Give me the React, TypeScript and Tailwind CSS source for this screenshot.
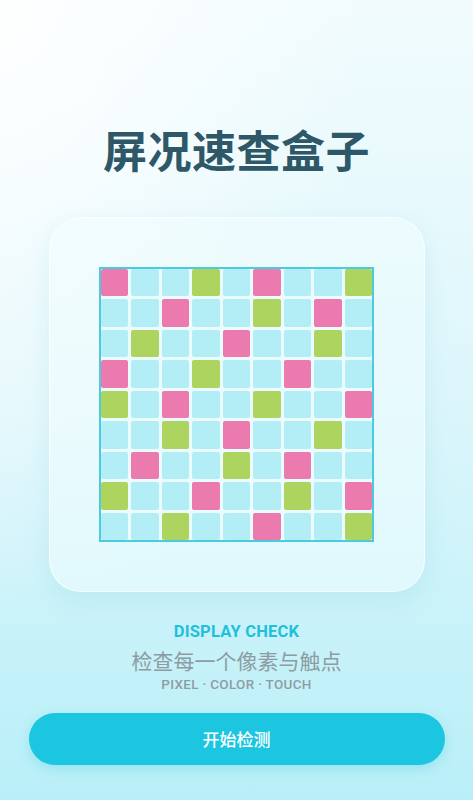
import React from "react";

const PATTERN = [
  "P..G.P..G",
  "..P..G.P.",
  ".G..P..G.",
  "P..G..P..",
  "G.P..G..P",
  "..G.P..G.",
  ".P..G.P..",
  "G..P..G.P",
  "..G..P..G",
];

function Cell({ c }: { c: string }) {
  if (c === "P") return <div className="rounded-[2px] bg-[#eb7aae]" />;
  if (c === "G") return <div className="rounded-[2px] bg-[#acd45e]" />;
  return <div className="rounded-[2px] bg-[#b3edf6]" />;
}

export default function App() {
  return (
    <div
      className="relative w-[473px] h-[800px] overflow-hidden bg-gradient-to-b from-[#f2fcfe] via-[#dcf6fb] to-[#b9eff8] flex flex-col items-center"
      style={{ fontFamily: "Roboto, 'Noto Sans CJK SC', sans-serif" }}
    >
      <div className="absolute inset-0 bg-[radial-gradient(ellipse_at_top_left,rgba(255,255,255,0.9),rgba(255,255,255,0)_55%)]" />
      <div className="relative flex flex-col items-center w-full">
        <h1
          className="mt-[119px] h-[60px] text-[44px] leading-[60px] font-bold text-[#2e5868] tracking-[0.5px]"
          style={{ fontFamily: "'Noto Sans CJK SC', sans-serif" }}
        >
          屏况速查盒子
        </h1>
        <div className="mt-[38px] w-[376px] h-[375px] rounded-[32px] bg-[rgba(240,253,255,0.55)] border border-[rgba(255,255,255,0.7)] shadow-[0_8px_24px_rgba(120,200,220,0.2)] flex items-center justify-center">
          <div className="w-[275px] h-[275px] bg-[#4ccae0] p-[2px]">
            <div className="w-full h-full bg-[#ecfbfd] grid grid-cols-9 grid-rows-9 gap-[3px]">
              {PATTERN.flatMap((row, r) =>
                row.split("").map((c, i) => <Cell key={`${r}-${i}`} c={c} />)
              )}
            </div>
          </div>
        </div>
        <div className="mt-[30px] text-[16.5px] leading-[20px] font-bold text-[#1fc0dc] tracking-[0.2px]">
          DISPLAY CHECK
        </div>
        <div
          className="mt-[5px] text-[21px] leading-[26px] text-[#8d9ca2]"
          style={{ fontFamily: "'Noto Sans CJK SC', sans-serif" }}
        >
          检查每一个像素与触点
        </div>
        <div className="mt-[2px] text-[13.5px] leading-[18px] font-medium text-[#8f9da3] tracking-[0.3px]">
          PIXEL · COLOR · TOUCH
        </div>
        <button
          className="mt-[20px] w-[416px] h-[52px] rounded-full bg-[#1cc6e0] text-white text-[17px] font-medium shadow-[0_4px_12px_rgba(28,198,224,0.25)]"
          style={{ fontFamily: "'Noto Sans CJK SC', sans-serif" }}
        >
          开始检测
        </button>
      </div>
    </div>
  );
}
